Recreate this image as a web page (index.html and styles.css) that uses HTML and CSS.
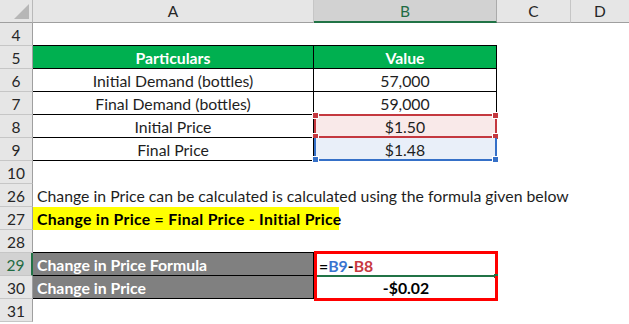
FILE: index.html
```html
<!DOCTYPE html>
<html>
<head>
<meta charset="utf-8">
<link rel="stylesheet" href="styles.css">
</head>
<body>
<div class="sheet">
  <div class="corner"><span class="tri"></span></div>
  <div class="ch">A</div>
  <div class="ch ch-sel">B</div>
  <div class="ch">C</div>
  <div class="ch last">D</div>

  <div class="rh">4</div>
  <div class="c bb"></div><div class="c bb"></div><div class="c"></div><div class="c"></div>

  <div class="rh">5</div>
  <div class="c t hd">Particulars</div><div class="c t hd">Value</div><div class="c"></div><div class="c"></div>

  <div class="rh">6</div>
  <div class="c t">Initial Demand (bottles)</div><div class="c t">57,000</div><div class="c"></div><div class="c"></div>

  <div class="rh">7</div>
  <div class="c t">Final Demand (bottles)</div><div class="c t">59,000</div><div class="c"></div><div class="c"></div>

  <div class="rh">8</div>
  <div class="c t">Initial Price</div>
  <div class="c t ref ref-red"><span class="refbox red"><i class="sq tl"></i><i class="sq tr"></i><i class="sq bl"></i><i class="sq br"></i></span><span class="val">$1.50</span></div>
  <div class="c"></div><div class="c"></div>

  <div class="rh">9</div>
  <div class="c t">Final Price</div>
  <div class="c t ref ref-blue"><span class="refbox blue"><i class="sq bl"></i><i class="sq br"></i></span><span class="val">$1.48</span></div>
  <div class="c"></div><div class="c"></div>

  <div class="rh">10</div>
  <div class="c"></div><div class="c"></div><div class="c"></div><div class="c"></div>

  <div class="rh">26</div>
  <div class="c span4 left">Change in Price can be calculated is calculated using the formula given below</div>

  <div class="rh">27</div>
  <div class="c span4 left"><span class="hl">Change in Price = Final Price - Initial Price</span></div>

  <div class="rh">28</div>
  <div class="c bb"></div><div class="c bb"></div><div class="c"></div><div class="c"></div>

  <div class="rh rh-sel">29</div>
  <div class="c g">Change in Price Formula</div>
  <div class="c b29"><span class="f"><span>=</span><span class="fb">B9</span><span>-</span><span class="fr">B8</span></span></div>
  <div class="c"></div><div class="c"></div>

  <div class="rh">30</div>
  <div class="c g">Change in Price</div>
  <div class="c b30">-$0.02</div>
  <div class="c"></div><div class="c"></div>

  <div class="rh">31</div>
  <div class="c"></div><div class="c"></div><div class="c"></div><div class="c"></div>
</div>
</body>
</html>
```

FILE: styles.css
```css
* { box-sizing: border-box; }
html, body { margin: 0; padding: 0; background: #fff; }
body {
  font-family: Lato, "Open Sans", sans-serif;
  font-size: 15.8px;
  color: #1e1e1e;
  width: 629px;
  height: 324px;
  overflow: hidden;
}
.sheet {
  display: grid;
  grid-template-columns: 33px 281px 183px 74px 58px;
  grid-auto-rows: 23px;
}
.corner {
  position: relative;
  background: #e6e6e6;
  border-right: 1px solid #b9b9b9;
  border-bottom: 1px solid #9f9f9f;
}
.tri {
  position: absolute;
  right: 3px;
  bottom: 3px;
  width: 0;
  height: 0;
  border-left: 15px solid transparent;
  border-bottom: 15px solid #b7b7b7;
}
.ch {
  background: #e6e6e6;
  border-right: 1px solid #c6c6c6;
  border-bottom: 1px solid #9f9f9f;
  display: flex;
  align-items: center;
  justify-content: center;
  color: #262626;
  font-size: 15.5px;
}
.ch.last { border-right: none; }
.ch-sel {
  background: #d2d2d2;
  color: #1f6b43;
  border-bottom: 2px solid #217346;
  border-right: 1px solid #ababab;
}
.rh {
  background: #e6e6e6;
  border-right: 1px solid #9f9f9f;
  border-bottom: 1px solid #c6c6c6;
  display: flex;
  align-items: center;
  justify-content: center;
  color: #262626;
  font-size: 15.5px;
  padding-top: 1px;
}
.rh-sel {
  background: #d2d2d2;
  color: #1f6b43;
  border-right: 2px solid #217346;
}
.c {
  display: flex;
  align-items: center;
  justify-content: center;
  white-space: nowrap;
  position: relative;
}
.bb { border-bottom: 1px solid #000; }
.t {
  border-right: 1px solid #000;
  border-bottom: 1px solid #000;
}
.hd {
  background: #00b050;
  color: #fff;
  font-weight: bold;
}
.left { justify-content: flex-start; padding-left: 4px; }
.span4 { grid-column: span 4; overflow: visible; }
.hl {
  background: #ffff00;
  font-weight: bold;
  color: #000;
  display: flex;
  align-items: center;
  height: 23px;
  margin-left: -4px;
  padding-left: 4px;
  width: 306px;
  letter-spacing: 0.3px;
}
.ref-red { background: #f9e9e9; }
.ref-blue { background: #e9eff9; }
.val { position: relative; }
.refbox {
  position: absolute;
  left: 0;
  top: -1px;
  right: -1px;
  bottom: -1px;
  border: 2px solid;
}
.refbox.red { border-color: #c4383f; }
.refbox.blue { border-color: #3570c8; border-top: none; top: 0; }
.sq {
  position: absolute;
  width: 5px;
  height: 5px;
  border: 1px solid #fff;
  box-sizing: content-box;
}
.red .sq { background: #c4383f; }
.blue .sq { background: #3570c8; }
.sq.tl { left: -4px; top: -4px; }
.sq.tr { right: -4px; top: -4px; }
.sq.bl { left: -4px; bottom: -4px; }
.sq.br { right: -4px; bottom: -4px; }
.g {
  background: #808080;
  color: #fff;
  font-weight: bold;
  justify-content: flex-start;
  padding-left: 4px;
  border-bottom: 1px solid #000;
  border-right: 1px solid #000;
}
.b29 {
  justify-content: flex-start;
  padding-left: 2px;
  font-weight: bold;
  border-top: 3px solid #ff0000;
  border-left: 3px solid #ff0000;
  border-right: 3px solid #ff0000;
  margin-top: -2px;
  margin-right: -1px;
}
.b29::after {
  content: "";
  position: absolute;
  left: 0;
  right: 0;
  bottom: -1px;
  height: 2px;
  background: #217346;
}
.b29::before {
  content: "";
  position: absolute;
  right: -3px;
  bottom: -2px;
  width: 4px;
  height: 4px;
  background: #217346;
}
.f { color: #000; }
.fb { color: #3a75d0; }
.fr { color: #c8393f; }
.b30 {
  font-weight: bold;
  color: #000;
  border-left: 3px solid #ff0000;
  border-right: 3px solid #ff0000;
  border-bottom: 3px solid #ff0000;
  margin-right: -1px;
  margin-bottom: -2px;
  padding-top: 1px;
}
```
